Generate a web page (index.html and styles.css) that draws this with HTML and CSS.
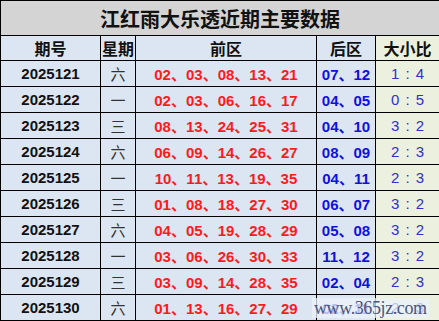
FILE: index.html
```html
<!DOCTYPE html>
<html>
<head>
<meta charset="utf-8">
<link rel="stylesheet" href="styles.css">
</head>
<body>
<div class="wrap">
<table class="tbl">
<colgroup><col class="c1"><col class="c2"><col class="c3"><col class="c4"><col class="c5"></colgroup>
<tr><th class="title" colspan="5">江红雨大乐透近期主要数据</th></tr>
<tr class="head"><th>期号</th><th>星期</th><th>前区</th><th>后区</th><th class="g">大小比</th></tr>
<tr><td class="no">2025121</td><td class="wk">六</td><td class="red">02、03、08、13、21</td><td class="blue">07、12</td><td class="ratio">1 : 4</td></tr>
<tr><td class="no">2025122</td><td class="wk">一</td><td class="red">02、03、06、16、17</td><td class="blue">04、05</td><td class="ratio">0 : 5</td></tr>
<tr><td class="no">2025123</td><td class="wk">三</td><td class="red">08、13、24、25、31</td><td class="blue">04、10</td><td class="ratio">3 : 2</td></tr>
<tr><td class="no">2025124</td><td class="wk">六</td><td class="red">06、09、14、26、27</td><td class="blue">08、09</td><td class="ratio">2 : 3</td></tr>
<tr><td class="no">2025125</td><td class="wk">一</td><td class="red">10、11、13、19、35</td><td class="blue">04、11</td><td class="ratio">2 : 3</td></tr>
<tr><td class="no">2025126</td><td class="wk">三</td><td class="red">01、08、18、27、30</td><td class="blue">06、07</td><td class="ratio">3 : 2</td></tr>
<tr><td class="no">2025127</td><td class="wk">六</td><td class="red">04、05、19、28、29</td><td class="blue">05、08</td><td class="ratio">3 : 2</td></tr>
<tr><td class="no">2025128</td><td class="wk">一</td><td class="red">03、06、26、30、33</td><td class="blue">11、12</td><td class="ratio">3 : 2</td></tr>
<tr><td class="no">2025129</td><td class="wk">三</td><td class="red">03、09、14、28、35</td><td class="blue">02、04</td><td class="ratio">2 : 3</td></tr>
<tr><td class="no">2025130</td><td class="wk">六</td><td class="red">01、13、16、27、29</td><td class="blue">02、11</td><td class="ratio">2 : 3</td></tr>
</table>
<span class="mark">www.365jz.com</span>
</div>
</body>
</html>
```
FILE: styles.css
```css
html, body { margin: 0; padding: 0; background: #fff; }
.wrap { position: relative; width: 439px; height: 321px; overflow: hidden; }
.tbl {
  border-collapse: collapse;
  table-layout: fixed;
  width: 439px;
  font-family: "Liberation Sans", "Noto Sans CJK SC", sans-serif;
}
.c1 { width: 100px; }
.c2 { width: 35px; }
.c3 { width: 181px; }
.c4 { width: 59px; }
.c5 { width: 64px; }
.tbl th, .tbl td {
  border: 1px solid #000;
  padding: 0;
  text-align: center;
  height: 25px;
  background: #dce6f2;
  white-space: nowrap;
}
.tbl th.title {
  height: 34px;
  background: #d4d4d4;
  font-family: "Noto Sans CJK SC", sans-serif;
  font-size: 20px;
  font-weight: bold;
  color: #111;
}
.head th {
  height: 24px;
  font-family: "Noto Sans CJK SC", sans-serif;
  font-size: 16px;
  font-weight: bold;
  color: #111;
}
.tbl .g, .tbl .ratio { background: #ebf1de; }
.no { font-size: 15px; font-weight: bold; color: #111; }
.wk { font-family: "Noto Sans CJK SC", sans-serif; font-size: 15px; color: #333; }
.red { font-size: 15px; font-weight: bold; color: #ff1a1a; }
.blue { font-size: 15px; font-weight: bold; color: #1010e0; }
.ratio { font-size: 15px; color: #3030cc; word-spacing: 2px; padding-left: 2px; }
.mark {
  position: absolute;
  left: 312px;
  top: 298px;
  padding: 0 2px;
  background: rgba(236, 241, 248, 0.75);
  font-family: "Liberation Serif", serif;
  font-size: 18px;
  line-height: 20px;
  color: #4a5580;
  letter-spacing: -0.4px;
}
```
